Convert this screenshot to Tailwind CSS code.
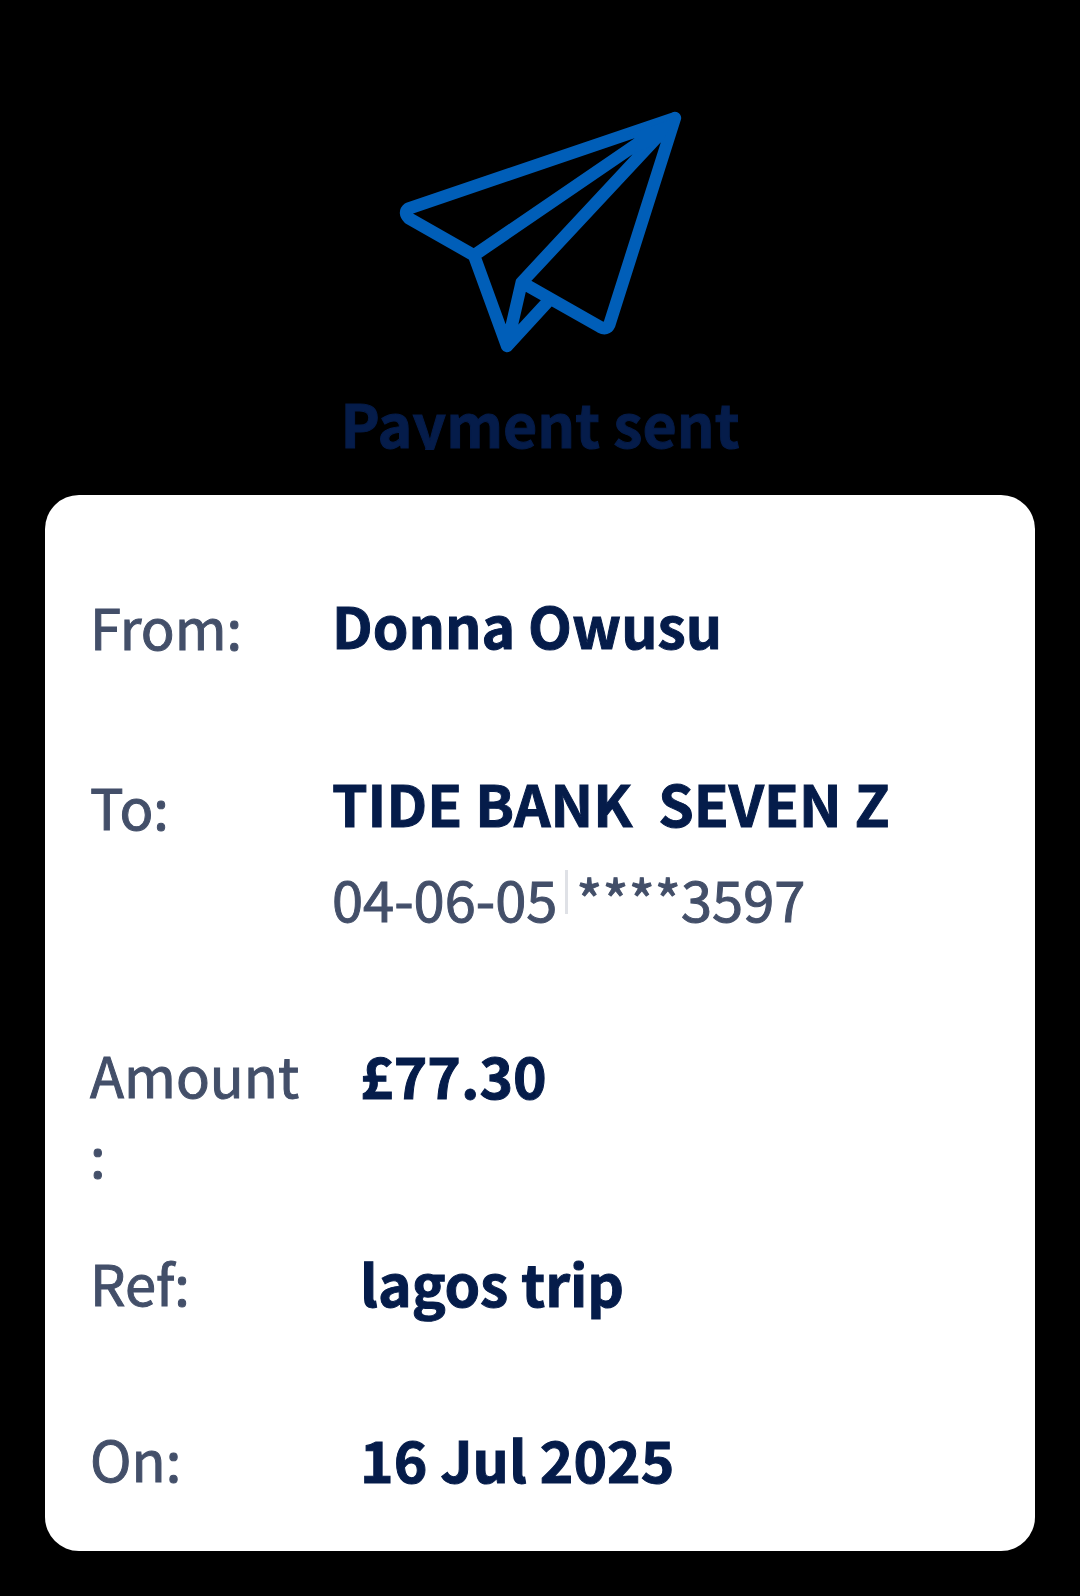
<!DOCTYPE html>
<html lang="en">
<head>
<meta charset="utf-8">
<meta name="viewport" content="width=device-width, initial-scale=1">
<title>Payment sent</title>
<script src="https://cdn.jsdelivr.net/npm/@tailwindcss/browser@4"></script>
</head>
<body class="min-h-screen bg-black font-['Noto_Sans_CJK_SC',sans-serif] text-[#051c4a] [-webkit-text-stroke:1px]">
<main class="flex flex-col px-[45px] pt-[90px] pb-[45px]">
  <header class="flex flex-col items-center">
    <svg class="h-[280px] w-[320px]" viewBox="0 0 960 840" fill="none" stroke="#005eb8" stroke-width="37" stroke-linejoin="round" stroke-linecap="round" aria-hidden="true">
      <path d="M885 84 85 356Q70 368 87 385L282 496 381 768 507 631M885 84 688 704Q680 721 661 711L425 577 381 768M885 84 282 496M885 84 425 577"/>
      <path d="M885 84 740 135 778 140 762 190 848 154Z" fill="#005eb8" stroke="none"/>
    </svg>
    <h1 class="h-20 overflow-hidden text-[59px] leading-[106px] font-bold whitespace-nowrap">Payment sent</h1>
  </header>
  <dl class="mt-[45px] rounded-[34px] bg-white pt-[89px] pr-6 pb-[53px] pl-[45px] text-[57px] leading-[80px]">
    <div class="flex">
      <dt class="w-[242px] shrink-0 pt-0.5 text-[56px] text-[#434f69]">From:</dt>
      <dd class="font-bold">Donna Owusu</dd>
    </div>
    <div class="mt-24 flex">
      <dt class="w-[242px] shrink-0 pt-1 text-[56px] text-[#434f69]">To:</dt>
      <dd>
        <p class="font-bold whitespace-pre">TIDE BANK  SEVEN Z</p>
        <p class="mt-4 flex text-[56px] text-[#434f69]">
          <span>04-06-05</span>
          <span class="mt-3 mr-2 ml-2 h-11 w-[3px] bg-[#dfe1e6]"></span>
          <span>****3597</span>
        </p>
      </dd>
    </div>
    <div class="mt-24 flex">
      <dt class="mr-[52px] w-[218px] shrink-0 text-[56px] wrap-anywhere text-[#434f69]">Amount:</dt>
      <dd class="font-bold">£77.30</dd>
    </div>
    <div class="mt-12 flex">
      <dt class="mr-[52px] w-[218px] shrink-0 text-[56px] text-[#434f69]">Ref:</dt>
      <dd class="font-bold">lagos trip</dd>
    </div>
    <div class="mt-24 flex">
      <dt class="mr-[52px] w-[218px] shrink-0 text-[56px] text-[#434f69]">On:</dt>
      <dd class="font-bold">16 Jul 2025</dd>
    </div>
  </dl>
</main>
</body>
</html>
